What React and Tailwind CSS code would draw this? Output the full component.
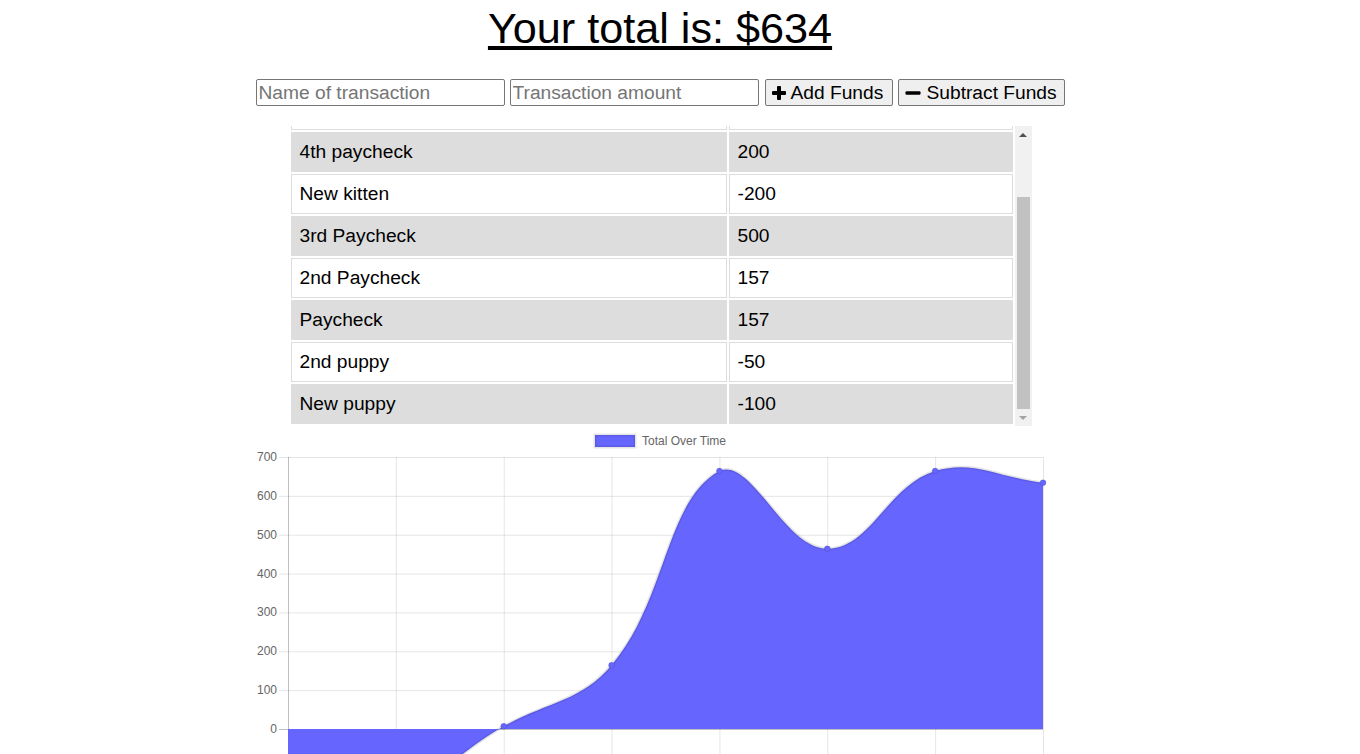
import React, { useLayoutEffect, useRef } from "react";

// newest first, like the list on the page
const transactions = [
  ["Coffee", "-30"],
  ["4th paycheck", "200"],
  ["New kitten", "-200"],
  ["3rd Paycheck", "500"],
  ["2nd Paycheck", "157"],
  ["Paycheck", "157"],
  ["2nd puppy", "-50"],
  ["New puppy", "-100"],
];

// running total, oldest to newest
const totals = [-100, -150, 7, 164, 664, 464, 664, 634];

const LEFT = 288;
const RIGHT = 1043;
const TOP = 457;
const ZERO = 729;
const PX = (ZERO - TOP) / 700;
const BOTTOM = ZERO + 200 * PX;
const step = (RIGHT - LEFT) / (totals.length - 1);

const xAt = (i) => LEFT + i * step;
const yAt = (v) => ZERO - v * PX;

function controlPoints(pts, t) {
  const clamp = (v, a, b) => Math.max(a, Math.min(b, v));
  return pts.map((cur, i) => {
    const prev = pts[i - 1] || cur;
    const next = pts[i + 1] || cur;
    const d01 = Math.hypot(cur.x - prev.x, cur.y - prev.y);
    const d12 = Math.hypot(next.x - cur.x, next.y - cur.y);
    const s01 = d01 / (d01 + d12) || 0;
    const s12 = d12 / (d01 + d12) || 0;
    const fa = t * s01;
    const fb = t * s12;
    return {
      ...cur,
      px: clamp(cur.x - fa * (next.x - prev.x), LEFT, RIGHT),
      py: clamp(cur.y - fa * (next.y - prev.y), TOP, BOTTOM),
      nx: clamp(cur.x + fb * (next.x - prev.x), LEFT, RIGHT),
      ny: clamp(cur.y + fb * (next.y - prev.y), TOP, BOTTOM),
    };
  });
}

function Chart() {
  const pts = controlPoints(
    totals.map((v, i) => ({ x: xAt(i), y: yAt(v) })),
    0.4
  );
  let line = `M${pts[0].x},${pts[0].y}`;
  for (let i = 1; i < pts.length; i++) {
    const a = pts[i - 1];
    const b = pts[i];
    line += ` C${a.nx},${a.ny} ${b.px},${b.py} ${b.x},${b.y}`;
  }
  const area = `${line} L${RIGHT},${ZERO} L${LEFT},${ZERO} Z`;
  const ticks = [700, 600, 500, 400, 300, 200, 100, 0, -100, -200];

  return (
    <svg
      className="block"
      width="1320"
      height="330"
      viewBox="0 426 1320 330"
      fontFamily="'Liberation Sans', Arial, sans-serif"
    >
      {/* legend */}
      <rect x="595" y="435" width="40" height="12" fill="#6666ff" stroke="rgba(0,0,0,0.1)" strokeWidth="3" />
      <text x="642" y="445" fontSize="12" fill="#666">
        Total Over Time
      </text>

      {/* grid */}
      {ticks.map((v) => (
        <g key={v}>
          <line
            x1="279"
            x2={RIGHT}
            y1={yAt(v) + 0.5}
            y2={yAt(v) + 0.5}
            stroke={v === 0 ? "rgba(0,0,0,0.25)" : "rgba(0,0,0,0.1)"}
          />
          <text x="277" y={yAt(v) + 4} fontSize="12" fill="#666" textAnchor="end">
            {v}
          </text>
        </g>
      ))}
      {totals.map((_, i) => (
        <line
          key={i}
          x1={xAt(i) + 0.5}
          x2={xAt(i) + 0.5}
          y1={TOP}
          y2={BOTTOM + 10}
          stroke={i === 0 ? "rgba(0,0,0,0.25)" : "rgba(0,0,0,0.1)"}
        />
      ))}

      {/* data */}
      <path d={area} fill="#6666ff" />
      <path d={line} fill="none" stroke="rgba(0,0,0,0.1)" strokeWidth="3" />
      {pts.map((p, i) => (
        <circle key={i} cx={p.x} cy={p.y} r="3" fill="#6666ff" stroke="rgba(0,0,0,0.1)" />
      ))}
    </svg>
  );
}

const PlusIcon = () => (
  <svg width="14" height="14" viewBox="0 0 14 14" className="shrink-0">
    <rect x="5" y="0" width="4" height="14" rx="1" fill="#000" />
    <rect x="0" y="5" width="14" height="4" rx="1" fill="#000" />
  </svg>
);

const MinusIcon = () => (
  <svg width="16" height="14" viewBox="0 0 16 14" className="shrink-0">
    <rect x="0.5" y="5.2" width="15" height="3.6" rx="1" fill="#000" />
  </svg>
);

export default function App() {
  const listRef = useRef(null);

  useLayoutEffect(() => {
    if (listRef.current) listRef.current.scrollTop = listRef.current.scrollHeight;
  }, []);

  return (
    <div className="w-[1320px] bg-white text-black font-['Liberation_Sans',Arial,sans-serif]">
      <h1 className="pt-[3px] text-center text-[43.2px] leading-[50px] underline">
        Your total is: $634
      </h1>

      <div className="mt-[26px] flex justify-center gap-[5px] text-[19.2px] leading-[22px]">
        <input
          type="text"
          placeholder="Name of transaction"
          className="h-[27px] w-[249px] rounded-[2px] border border-[#767676] px-[2px] placeholder:text-[#757575]"
        />
        <input
          type="number"
          placeholder="Transaction amount"
          className="h-[27px] w-[249px] rounded-[2px] border border-[#767676] px-[2px] placeholder:text-[#757575]"
        />
        <button className="ml-[1px] flex h-[27px] w-[128px] items-center gap-[5px] rounded-[2px] border border-[#767676] bg-[#efefef] px-[6px]">
          <PlusIcon />
          Add Funds
        </button>
        <button className="flex h-[27px] w-[167px] items-center gap-[6px] rounded-[2px] border border-[#767676] bg-[#efefef] px-[6px]">
          <MinusIcon />
          Subtract Funds
        </button>
      </div>

      <div className="mx-auto mt-[20px] flex h-[300px] w-[743px]">
        <div
          ref={listRef}
          className="h-full flex-1 overflow-y-scroll [scrollbar-width:none] [&::-webkit-scrollbar]:hidden"
        >
          <table className="w-full table-fixed border-separate border-spacing-[2px] text-[19.2px] leading-[22px]">
            <thead>
              <tr>
                <th className="h-[40px] w-[436px] border border-[#dddddd] px-2 py-2 text-left font-normal">Transaction</th>
                <th className="h-[40px] border border-[#dddddd] px-2 py-2 text-left font-normal">Amount</th>
              </tr>
            </thead>
            <tbody>
              {transactions.map(([name, amount], i) => (
                <tr key={name} className={i % 2 === 1 ? "bg-[#dddddd]" : ""}>
                  <td className="h-[40px] border border-[#dddddd] px-2 py-2">{name}</td>
                  <td className="h-[40px] border border-[#dddddd] px-2 py-2">{amount}</td>
                </tr>
              ))}
            </tbody>
          </table>
        </div>

        {/* scrollbar, drawn at its scrolled-to-bottom position */}
        <div className="flex w-[17px] shrink-0 flex-col bg-[#f1f1f1]">
          <div className="flex h-[17px] items-center justify-center">
            <div className="h-0 w-0 border-x-[4px] border-b-[4px] border-x-transparent border-b-[#505050]" />
          </div>
          <div className="flex-1" />
          <div className="mx-[2px] h-[212px] bg-[#c1c1c1]" />
          <div className="flex h-[17px] items-center justify-center">
            <div className="h-0 w-0 border-x-[4px] border-t-[4px] border-x-transparent border-t-[#a3a3a3]" />
          </div>
        </div>
      </div>

      <Chart />
    </div>
  );
}
